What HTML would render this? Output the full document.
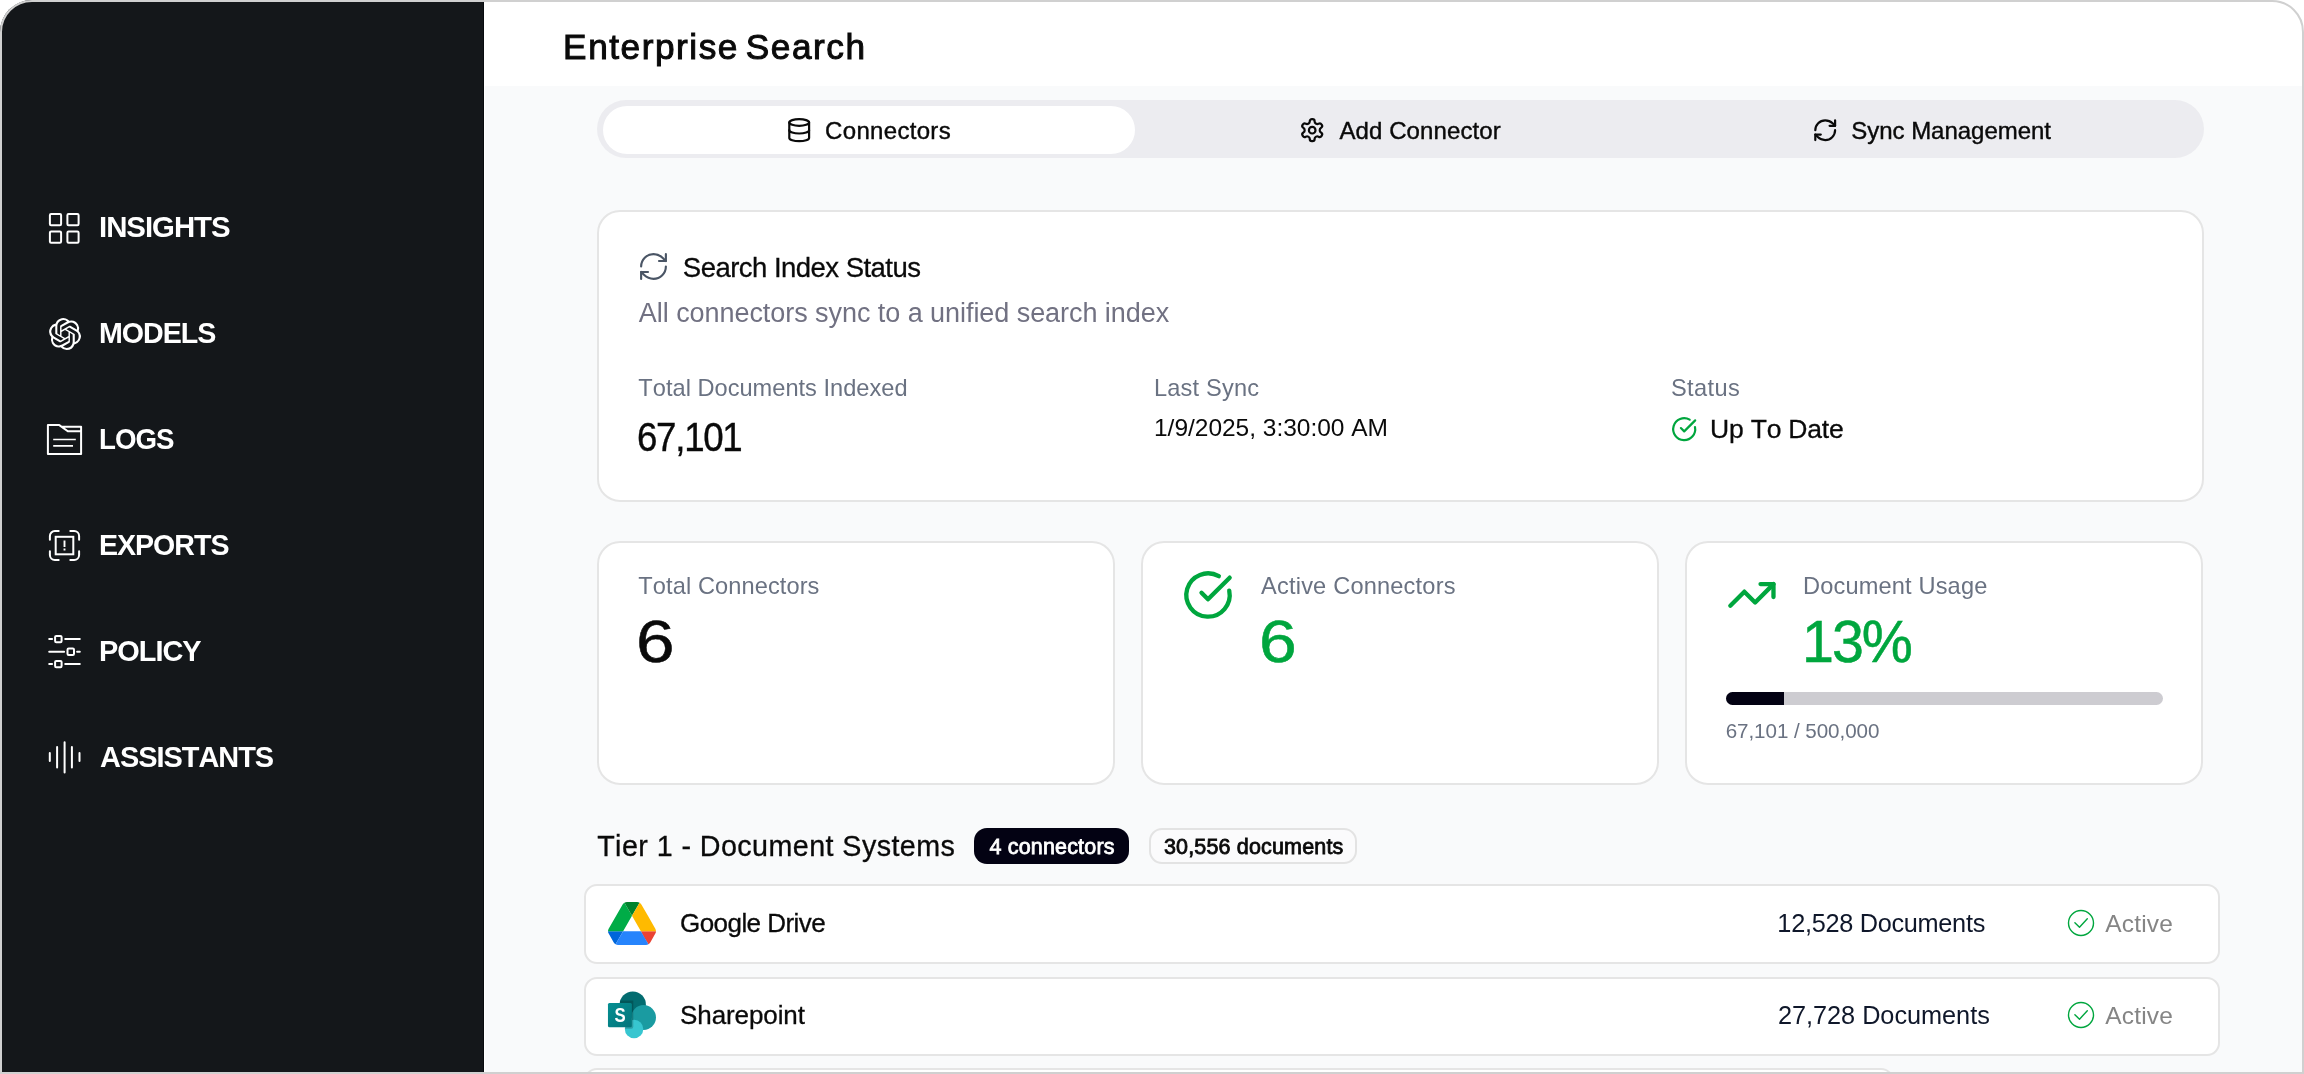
<!DOCTYPE html>
<html lang="en">
<head>
<meta charset="utf-8">
<title>Enterprise Search</title>
<style>
html,body{margin:0;padding:0;background:#fff;}
body{width:2304px;height:1074px;position:relative;overflow:hidden;font-family:"Liberation Sans",sans-serif;}
.win{will-change:transform;position:absolute;left:0;top:0;width:2304px;height:1074px;border-radius:32px 32px 0 0;overflow:hidden;background:#f9fafb;}
.frame{position:absolute;left:0;top:0;width:2304px;height:1074px;box-sizing:border-box;border:2px solid #d0d0d0;border-radius:32px 32px 0 0;pointer-events:none;z-index:50;}
.abs{position:absolute;box-sizing:border-box;}
.t{position:absolute;white-space:pre;line-height:1;font-weight:400;font-style:normal;text-transform:none;text-indent:0;word-spacing:0;text-shadow:none;font-family:"Liberation Sans",sans-serif;font-kerning:none;transform-origin:0 0;}
.gt text{font-family:"Liberation Sans",sans-serif;font-kerning:none;}
.sidebar{left:0;top:0;width:483.7px;height:1072.5px;background:#14171a;border-right:1px solid #080b0e;border-bottom:1.500px solid #080b0e;}
.header{left:484px;top:0;width:1820px;height:86px;background:#fff;}
.tabs{left:597px;top:99.5px;width:1606.5px;height:58px;border-radius:29px;background:#ececf0;}
.tab-on{left:602.5px;top:105.5px;width:532px;height:48px;border-radius:24px;background:#fff;}
.card{background:#fff;border:2px solid #e5e5e5;border-radius:23px;}
.row{background:#fff;border:2px solid #e5e5e5;border-radius:13px;}
svg{position:absolute;overflow:visible;}
.g{display:contents;}
.ic{fill:none;stroke-linecap:round;stroke-linejoin:round;}
</style>
</head>
<body>
<div class="win">

  <!-- ================= sidebar ================= -->
  <nav class="g">
    <div class="abs sidebar"></div>
    <a class="g"><svg width="36" height="36" viewBox="0 0 36 36" style="left:47px;top:210.5px;" class="ic" stroke="#fff" stroke-width="2">
    <rect x="2.9" y="3.1" width="11.2" height="11.2" rx="1.2"/>
    <rect x="20.4" y="3.1" width="11.2" height="11.2" rx="1.2"/>
    <rect x="2.9" y="20.6" width="11.2" height="11.2" rx="1.2"/>
    <rect x="20.4" y="20.6" width="11.2" height="11.2" rx="1.2"/>
  </svg><span class="t" style="left:99.43px;top:212px;font-size:29.5px;color:#fff;font-weight:700;letter-spacing:-1.033px;transform:scaleX(0.9964);">INSIGHTS</span></a>
    <a class="g"><svg width="32" height="32" viewBox="0 0 24 24" style="left:48.800px;top:317.700px;" fill="#fff">
    <path d="M22.2819 9.8211a5.9847 5.9847 0 0 0-.5157-4.9108 6.0462 6.0462 0 0 0-6.5098-2.9A6.0651 6.0651 0 0 0 4.9807 4.1818a5.9847 5.9847 0 0 0-3.9977 2.9 6.0462 6.0462 0 0 0 .7427 7.0966 5.98 5.98 0 0 0 .511 4.9107 6.051 6.051 0 0 0 6.5146 2.9001A5.9847 5.9847 0 0 0 13.2599 24a6.0557 6.0557 0 0 0 5.7718-4.2058 5.9894 5.9894 0 0 0 3.9977-2.9001 6.0557 6.0557 0 0 0-.7475-7.0729zm-9.022 12.6081a4.4755 4.4755 0 0 1-2.8764-1.0408l.1419-.0804 4.7783-2.7582a.7948.7948 0 0 0 .3927-.6813v-6.7369l2.02 1.1686a.071.071 0 0 1 .038.052v5.5826a4.504 4.504 0 0 1-4.4945 4.4944zm-9.6607-4.1254a4.4708 4.4708 0 0 1-.5346-3.0137l.142.0852 4.783 2.7582a.7712.7712 0 0 0 .7806 0l5.8428-3.3685v2.3324a.0804.0804 0 0 1-.0332.0615L9.74 19.9502a4.4992 4.4992 0 0 1-6.1408-1.6464zM2.3408 7.8956a4.485 4.485 0 0 1 2.3655-1.9728V11.6a.7664.7664 0 0 0 .3879.6765l5.8144 3.3543-2.0201 1.1685a.0757.0757 0 0 1-.071 0l-4.8303-2.7865A4.504 4.504 0 0 1 2.3408 7.872zm16.5963 3.8558L13.1038 8.364 15.1192 7.2a.0757.0757 0 0 1 .071 0l4.8303 2.7913a4.4944 4.4944 0 0 1-.6765 8.1042v-5.6772a.79.79 0 0 0-.407-.667zm2.0107-3.0231l-.142-.0852-4.7735-2.7818a.7759.7759 0 0 0-.7854 0L9.409 9.2297V6.8974a.0662.0662 0 0 1 .0284-.0615l4.8303-2.7866a4.4992 4.4992 0 0 1 6.6802 4.66zM8.3065 12.863l-2.02-1.1638a.0804.0804 0 0 1-.038-.0567V6.0742a4.4992 4.4992 0 0 1 7.3757-3.4537l-.142.0805L8.704 5.459a.7948.7948 0 0 0-.3927.6813zm1.0976-2.3654l2.602-1.4998 2.6069 1.4998v2.9994l-2.5974 1.4997-2.6067-1.4997Z"/>
  </svg><span class="t" style="left:99.19px;top:318px;font-size:29.5px;color:#fff;font-weight:700;letter-spacing:-1.033px;transform:scaleX(0.9702);">MODELS</span></a>
    <a class="g"><svg width="40" height="36" viewBox="0 0 40 36" style="left:45px;top:422px;" class="ic" stroke="#fff">
    <path stroke-width="2" d="M16.6 4.7H36.100V32H2.900V3.100H14.300L22.800 9.300H36.100"/>
    <path stroke-width="1.7" stroke-linecap="butt" d="M8.2 17.5h22.6M8.2 23.8h19.8"/>
  </svg><span class="t" style="left:99.25px;top:424px;font-size:29.5px;color:#fff;font-weight:700;letter-spacing:-1.033px;transform:scaleX(0.9384);">LOGS</span></a>
    <a class="g"><svg width="36" height="36" viewBox="0 0 36 36" style="left:47px;top:528px;" class="ic" stroke="#fff" stroke-width="2">
    <path d="M2.900 11.700V8a5 5 0 0 1 5-5h3.800M23.300 3h3.800a5 5 0 0 1 5 5v3.700M32.100 23.300V27a5 5 0 0 1-5 5h-3.800M11.700 32H7.900a5 5 0 0 1-5-5v-3.700"/>
    <rect x="8.700" y="8.800" width="17.600" height="17.500" stroke-linejoin="miter"/>
    <path stroke-width="1.900" stroke-linecap="butt" d="M17.500 12.400v6.500M17.500 20.500v2"/>
  </svg><span class="t" style="left:99.19px;top:530px;font-size:29.5px;color:#fff;font-weight:700;letter-spacing:-1.033px;transform:scaleX(0.9677);">EXPORTS</span></a>
    <a class="g"><svg width="36" height="36" viewBox="0 0 36 36" style="left:47px;top:634px;" class="ic" stroke="#fff" stroke-width="2" stroke-linecap="butt">
    <path d="M2.200 5.100h2.900M18.200 5.100h14.600M2.200 17.700h14.900M30.100 17.700h2.700M2.200 30.100h2.900M18.200 30.100h14.600"/>
    <rect x="8.100" y="1.900" width="6.500" height="6.400" rx="1.200"/>
    <rect x="20.500" y="14.500" width="6.500" height="6.400" rx="1.200"/>
    <rect x="8.100" y="26.900" width="6.500" height="6.400" rx="1.200"/>
  </svg><span class="t" style="left:99.17px;top:636px;font-size:29.5px;color:#fff;font-weight:700;letter-spacing:-1.033px;transform:scaleX(0.9804);">POLICY</span></a>
    <a class="g"><svg width="36" height="36" viewBox="0 0 36 36" style="left:47px;top:739px;" class="ic" stroke="#fff" stroke-width="2" stroke-linecap="butt">
    <path d="M2.800 14v7.900M10.100 7.900v20.500M17.600 3.200v30.200M24.900 7.900v20.500M32.500 14v7.900"/>
  </svg><span class="t" style="left:100.18px;top:742px;font-size:29.5px;color:#fff;font-weight:700;letter-spacing:-1.033px;transform:scaleX(0.9808);">ASSISTANTS</span></a>
  </nav>

  <!-- ================= header ================= -->
  <header class="g">
    <div class="abs header"></div>
    <h1 class="g"><span class="t" style="left:563.11px;top:29px;font-size:35.2px;color:#0a0a0a;letter-spacing:1.546px;word-spacing:-4.5px;-webkit-text-stroke:1.0px #0a0a0a;">Enterprise Search</span></h1>
  </header>
  <div class="abs" style="left:483.700px;top:86px;width:1.700px;height:988px;background:#fff;"></div>

  <main class="g">
  <!-- ================= tabs ================= -->
  <div class="g" role="tablist">
    <div class="abs tabs"></div>
    <button class="g" role="tab"><span class="abs tab-on"></span><svg width="26.400" height="26.400" viewBox="0 0 24 24" style="left:785.700px;top:117px;" class="ic" stroke="#0a0a0a" stroke-width="2">
    <ellipse cx="12" cy="5" rx="9" ry="3"/><path d="M3 5V19A9 3 0 0 0 21 19V5"/><path d="M3 12A9 3 0 0 0 21 12"/>
  </svg><span class="t" style="left:825.08px;top:119px;font-size:24px;color:#0a0a0a;letter-spacing:0.317px;-webkit-text-stroke:0.4px #0a0a0a;">Connectors</span></button>
    <button class="g" role="tab"><svg width="26.400" height="26.400" viewBox="0 0 24 24" style="left:1298.900px;top:117px;" class="ic" stroke="#0a0a0a" stroke-width="2">
    <path d="M12.22 2h-.44a2 2 0 0 0-2 2v.18a2 2 0 0 1-1 1.730l-.43.250a2 2 0 0 1-2 0l-.15-.080a2 2 0 0 0-2.730.730l-.22.380a2 2 0 0 0 .730 2.730l.15.100a2 2 0 0 1 1 1.720v.510a2 2 0 0 1-1 1.740l-.15.090a2 2 0 0 0-.730 2.730l.22.380a2 2 0 0 0 2.730.730l.15-.080a2 2 0 0 1 2 0l.43.250a2 2 0 0 1 1 1.730V20a2 2 0 0 0 2 2h.44a2 2 0 0 0 2-2v-.18a2 2 0 0 1 1-1.730l.43-.250a2 2 0 0 1 2 0l.15.080a2 2 0 0 0 2.730-.730l.22-.390a2 2 0 0 0-.730-2.730l-.15-.080a2 2 0 0 1-1-1.740v-.5a2 2 0 0 1 1-1.740l.15-.090a2 2 0 0 0 .730-2.730l-.22-.380a2 2 0 0 0-2.730-.730l-.15.080a2 2 0 0 1-2 0l-.43-.250a2 2 0 0 1-1-1.730V4a2 2 0 0 0-2-2z"/><circle cx="12" cy="12" r="3"/>
  </svg><span class="t" style="left:1339.45px;top:119px;font-size:24px;color:#0a0a0a;letter-spacing:0.095px;-webkit-text-stroke:0.4px #0a0a0a;">Add Connector</span></button>
    <button class="g" role="tab"><svg width="26.400" height="26.400" viewBox="0 0 24 24" style="left:1811.700px;top:117px;" class="ic" stroke="#0a0a0a" stroke-width="2">
    <path d="M3 12a9 9 0 0 1 9-9 9.750 9.750 0 0 1 6.740 2.740L21 8"/><path d="M21 3v5h-5"/><path d="M21 12a9 9 0 0 1-9 9 9.750 9.750 0 0 1-6.740-2.740L3 16"/><path d="M8 16H3v5"/>
  </svg><span class="t" style="left:1851.31px;top:119px;font-size:24px;color:#0a0a0a;letter-spacing:-0.032px;-webkit-text-stroke:0.4px #0a0a0a;">Sync Management</span></button>
  </div>

  <!-- ================= search index status card ================= -->
  <section class="g">
    <div class="abs card" style="left:597px;top:210px;width:1606.5px;height:292px;"></div>
    <h2 class="g"><svg width="33" height="33" viewBox="0 0 24 24" style="left:637.100px;top:250.400px;" class="ic" stroke="#4a5565" stroke-width="1.55">
    <path d="M3 12a9 9 0 0 1 9-9 9.750 9.750 0 0 1 6.740 2.740L21 8"/><path d="M21 3v5h-5"/><path d="M21 12a9 9 0 0 1-9 9 9.750 9.750 0 0 1-6.740-2.740L3 16"/><path d="M8 16H3v5"/>
  </svg><span class="t" style="left:682.85px;top:254px;font-size:27.5px;color:#0a0a0a;letter-spacing:-0.528px;-webkit-text-stroke:0.3px #0a0a0a;">Search Index Status</span></h2>
    <p class="g"><span class="t" style="left:638.85px;top:300px;font-size:27px;color:#717182;letter-spacing:-0.056px;">All connectors sync to a unified search index</span></p>
    <div class="g"><span class="t" style="left:638.37px;top:377px;font-size:23.6px;color:#6a7282;letter-spacing:0.015px;">Total Documents Indexed</span><span class="t" style="left:637.04px;top:417px;font-size:41px;color:#0a0a0a;letter-spacing:-1.435px;-webkit-text-stroke:0.4px #0a0a0a;transform:scaleX(0.8945);">67,101</span></div>
    <div class="g"><span class="t" style="left:1153.96px;top:377px;font-size:23.6px;color:#6a7282;letter-spacing:0.178px;">Last Sync</span><span class="t" style="left:1154.03px;top:416px;font-size:24.5px;color:#0a0a0a;letter-spacing:-0.021px;">1/9/2025, 3:30:00 AM</span></div>
    <div class="g"><span class="t" style="left:1670.93px;top:377px;font-size:23.6px;color:#6a7282;letter-spacing:0.384px;">Status</span><svg width="26.400" height="26.400" viewBox="0 0 24 24" style="left:1671.100px;top:416.100px;" class="ic" stroke="#00a63e" stroke-width="2">
    <path d="M21.801 10A10 10 0 1 1 17 3.335"/><path d="m9 11 3 3L22 4"/>
  </svg><span class="t" style="left:1709.96px;top:416px;font-size:26.5px;color:#0a0a0a;letter-spacing:-0.187px;-webkit-text-stroke:0.3px #0a0a0a;">Up To Date</span></div>
  </section>

  <!-- ================= stat cards ================= -->
  <section class="g">
    <div class="abs card" style="left:597px;top:541px;width:518px;height:243.5px;"></div>
    <span class="t" style="left:638.37px;top:575px;font-size:23.6px;color:#6a7282;letter-spacing:0.092px;">Total Connectors</span><span class="t" style="left:636.08px;top:612px;font-size:60px;color:#0a0a0a;-webkit-text-stroke:0.5px #0a0a0a;transform:scaleX(1.1558);">6</span>
  </section>
  <section class="g">
    <div class="abs card" style="left:1141px;top:541px;width:518px;height:243.5px;"></div>
    <svg width="52" height="52" viewBox="0 0 24 24" style="left:1181.600px;top:569.300px;" class="ic" stroke="#00a63e" stroke-width="2">
    <path d="M21.801 10A10 10 0 1 1 17 3.335"/><path d="m9 11 3 3L22 4"/>
  </svg><span class="t" style="left:1261.05px;top:575px;font-size:23.6px;color:#6a7282;letter-spacing:0.187px;">Active Connectors</span><span class="t" style="left:1258.56px;top:612px;font-size:60px;color:#00a63e;-webkit-text-stroke:0.5px #00a63e;transform:scaleX(1.1306);">6</span>
  </section>
  <section class="g">
    <div class="abs card" style="left:1685px;top:541px;width:518px;height:243.5px;"></div>
    <svg width="51.800" height="51.800" viewBox="0 0 24 24" style="left:1725.840px;top:568.850px;" class="ic" stroke="#00a63e" stroke-width="2">
    <polyline points="22 7 13.5 15.5 8.5 10.5 2 17"/><polyline points="16 7 22 7 22 13"/>
  </svg><span class="t" style="left:1802.96px;top:575px;font-size:23.6px;color:#6a7282;letter-spacing:0.158px;">Document Usage</span><span class="t" style="left:1801.93px;top:612px;font-size:60px;color:#00a63e;letter-spacing:-2.100px;-webkit-text-stroke:0.5px #00a63e;transform:scaleX(0.9571);">13%</span>
    <div class="abs" style="left:1725.5px;top:692px;width:437.5px;height:13.2px;border-radius:7px;background:#cdccd1;overflow:hidden;">
      <div class="abs" style="left:0;top:0;width:58.400px;height:100%;background:#030213;"></div>
    </div>
    <span class="t" style="left:1725.65px;top:721px;font-size:20.6px;color:#6a7282;letter-spacing:-0.053px;">67,101 / 500,000</span>
  </section>

  <!-- ================= tier 1 ================= -->
  <section class="g">
    <div class="g">
      <h3 class="g"><span class="t" style="left:597.16px;top:832px;font-size:28.7px;color:#0a0a0a;letter-spacing:0.425px;-webkit-text-stroke:0.3px #0a0a0a;">Tier 1 - Document Systems</span></h3>
      <div class="abs" style="left:974px;top:827.8px;width:154.9px;height:36px;border-radius:13px;background:#030213;"></div>
      <span class="t" style="left:989.51px;top:837px;font-size:21.5px;color:#fff;letter-spacing:0.170px;-webkit-text-stroke:0.8px #fff;">4 connectors</span>
      <div class="abs" style="left:1148.5px;top:827.8px;width:208.5px;height:36px;border-radius:13px;border:2px solid #e3e3e3;background:#fbfbfc;"></div>
      <span class="t" style="left:1163.98px;top:837px;font-size:21.5px;color:#0a0a0a;letter-spacing:0.160px;-webkit-text-stroke:0.8px #0a0a0a;">30,556 documents</span>
    </div>
    <div class="g">
      <div class="abs row" style="left:584px;top:884px;width:1636px;height:79.5px;"></div>
      <svg width="48" height="42.900" viewBox="0 0 87.3 78" style="left:608px;top:902.100px;">
    <path d="m6.6 66.850 3.850 6.650c.8 1.400 1.950 2.500 3.300 3.300l13.750-23.800h-27.500c0 1.550.4 3.100 1.200 4.500z" fill="#0066da"/>
    <path d="m43.650 25-13.750-23.800c-1.350.8-2.500 1.900-3.300 3.300l-25.400 44a9.060 9.060 0 0 0 -1.200 4.500h27.500z" fill="#00ac47"/>
    <path d="m73.550 76.800c1.350-.8 2.500-1.900 3.300-3.300l1.600-2.750 7.650-13.250c.8-1.400 1.200-2.950 1.200-4.500h-27.502l5.852 11.500z" fill="#ea4335"/>
    <path d="m43.650 25 13.750-23.800c-1.350-.8-2.900-1.200-4.500-1.200h-18.500c-1.600 0-3.150.45-4.500 1.200z" fill="#00832d"/>
    <path d="m59.800 53h-32.300l-13.750 23.800c1.350.8 2.900 1.200 4.500 1.200h50.800c1.600 0 3.150-.45 4.500-1.200z" fill="#2684fc"/>
    <path d="m73.400 26.500-12.700-22c-.8-1.400-1.950-2.500-3.300-3.300l-13.750 23.800 16.150 28h27.450c0-1.550-.4-3.100-1.200-4.500z" fill="#ffba00"/>
  </svg><span class="t" style="left:679.99px;top:910px;font-size:26px;color:#0a0a0a;letter-spacing:-0.552px;-webkit-text-stroke:0.3px #0a0a0a;">Google Drive</span><span class="t" style="left:1777.37px;top:911px;font-size:25.3px;color:#0f172a;letter-spacing:-0.295px;">12,528 Documents</span><svg width="30" height="30" viewBox="0 0 30 30" style="left:2066px;top:907.800px;" class="ic" stroke="#00a63e" stroke-width="1.400">
    <circle cx="15" cy="15" r="12.500"/><path d="M8.900 14.800l4.600 4.400 7.800-8.400"/>
  </svg><span class="t" style="left:2105.15px;top:912px;font-size:24.5px;color:#858585;letter-spacing:0.204px;">Active</span>
    </div>
    <div class="g">
      <div class="abs row" style="left:584px;top:976.5px;width:1636px;height:79.5px;"></div>
      <svg width="50" height="50" viewBox="0 0 50 50" style="left:607px;top:990px;">
    <defs><clipPath id="spc"><circle cx="25.750" cy="14.650" r="13.150"/><circle cx="36.570" cy="27.500" r="12.400"/><circle cx="27.050" cy="39" r="9.250"/></clipPath><linearGradient id="spg" x1="0" y1="0" x2="1" y2="1"><stop offset="0" stop-color="#058f92"/><stop offset="1" stop-color="#03747a"/></linearGradient></defs>
    <circle cx="25.750" cy="14.650" r="13.150" fill="#036c70"/>
    <circle cx="36.570" cy="27.500" r="12.400" fill="#1a9ba1"/>
    <circle cx="27.050" cy="39" r="9.250" fill="#37c6d0"/>
    <path clip-path="url(#spc)" d="M13 10.500h13.300v26.200a2 2 0 0 1-2 2H13z" fill="#000" opacity=".2"/>
    <rect x="0.960" y="12.900" width="23.900" height="24.300" rx="1.500" fill="url(#spg)"/>
    <text transform="translate(13.100 32.100) scale(0.860 1)" text-anchor="middle" font-family="Liberation Sans, sans-serif" font-weight="700" font-size="19.500" fill="#fff">S</text>
  </svg><span class="t" style="left:680.12px;top:1002px;font-size:26px;color:#0a0a0a;letter-spacing:-0.110px;-webkit-text-stroke:0.3px #0a0a0a;">Sharepoint</span><span class="t" style="left:1778.03px;top:1003px;font-size:25.3px;color:#0f172a;letter-spacing:-0.039px;">27,728 Documents</span><svg width="30" height="30" viewBox="0 0 30 30" style="left:2066px;top:1000.300px;" class="ic" stroke="#00a63e" stroke-width="1.400">
    <circle cx="15" cy="15" r="12.500"/><path d="M8.900 14.800l4.600 4.400 7.800-8.400"/>
  </svg><span class="t" style="left:2105.15px;top:1004px;font-size:24.5px;color:#858585;letter-spacing:0.204px;">Active</span>
    </div>
    <div class="g">
      <div class="abs row" style="left:584px;top:1068px;width:1310px;height:79.5px;"></div>
    </div>
  </section>
  </main>
</div>
<div class="frame"></div>
</body>
</html>
